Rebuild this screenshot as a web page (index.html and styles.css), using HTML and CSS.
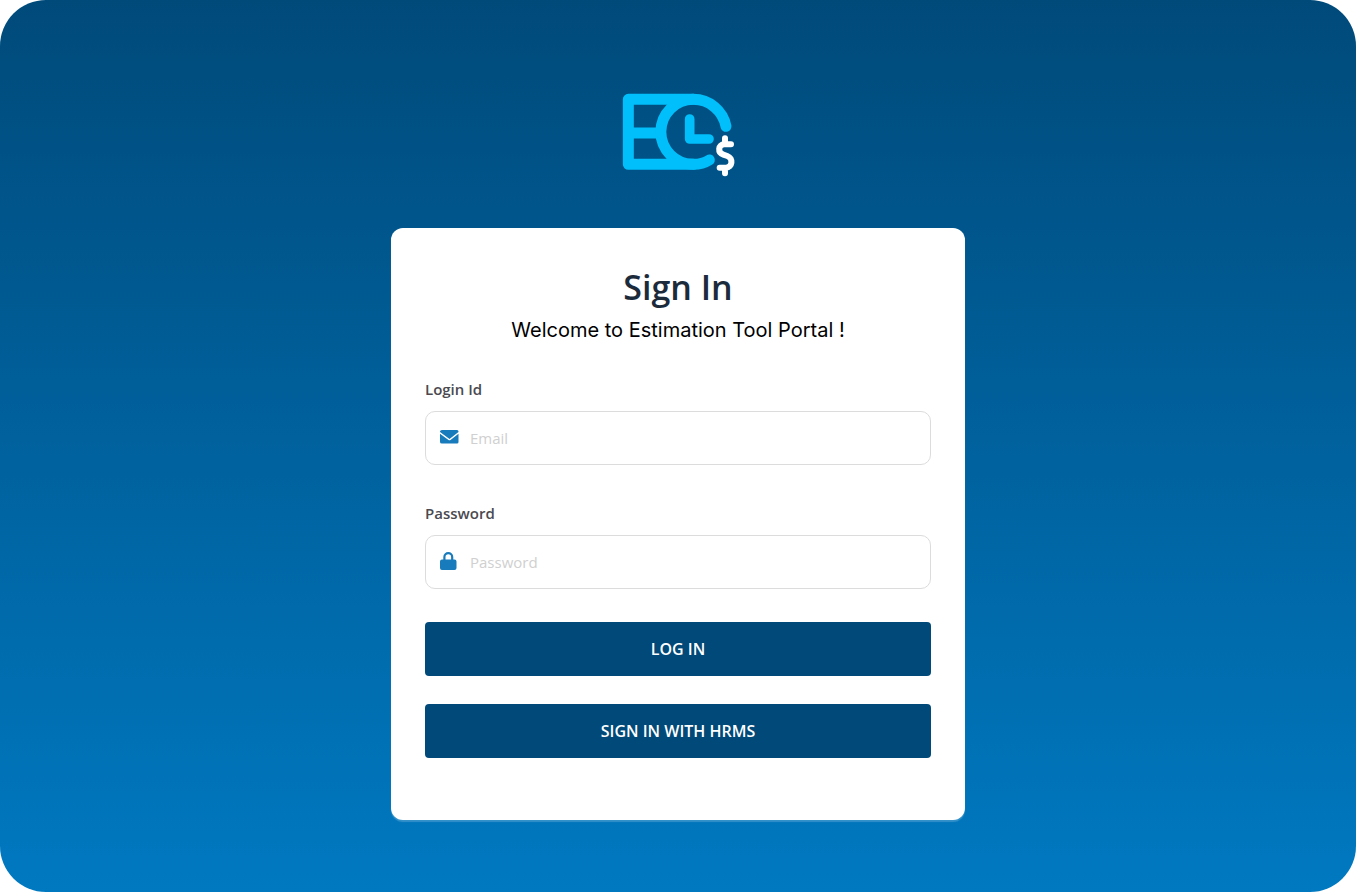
FILE: index.html
```html
<!DOCTYPE html>
<html lang="en">
<head>
    <meta charset="UTF-8">
    <meta name="viewport" content="width=device-width, initial-scale=1.0">
    <title>Estimation Tool Portal - Sign In</title>
    <link rel="stylesheet" href="styles.css">
</head>
<body>
    <main class="login-page">
        <svg class="logo" viewBox="36 40 339 252" fill="none" stroke-linecap="round" stroke-linejoin="round" role="img" aria-label="Estimation Tool">
            <g stroke="#00bffa" stroke-width="33">
                <path d="M250 59H55V254H250M55 160H150" />
                <path d="M348 140A100 100 0 0 0 250 59A97.500 97.500 0 0 0 250 254Q278 254 298 241" />
                <path d="M239 118V178H297" stroke-width="29" />
            </g>
            <path d="M345 176V194M345 264V281M363 194H343C324 194 322 219 340 225L352 229C371 236 367 264 348 264H329" stroke="#fff" stroke-width="18" />
        </svg>

        <section class="card">
            <h1>Sign In</h1>
            <p class="subtitle">Welcome to Estimation Tool Portal !</p>

            <form>
                <div class="field">
                    <label for="email">Login Id</label>
                    <div class="input-box">
                        <svg class="icon" viewBox="0 0 20 20" aria-hidden="true">
                            <path d="M2 2H17Q18.500 2 18.500 3.500V4L9.500 11L0 4V3.500Q0 2 2 2ZM0 5.800L8.500 12Q9.500 12.700 10.500 12L18.500 5.800V14Q18.500 15.500 17 15.500H2Q0 15.500 0 14Z" />
                        </svg>
                        <input type="email" id="email" placeholder="Email">
                    </div>
                </div>

                <div class="field">
                    <label for="password">Password</label>
                    <div class="input-box">
                        <svg class="icon" viewBox="0 0 20 20" aria-hidden="true">
                            <path d="M3.300 7.500V5A5 5 0 0 1 13.300 5V7.500H14.500Q16.500 7.500 16.500 9.500V16Q16.500 18 14.500 18H2Q0 18 0 16V9.500Q0 7.500 2 7.500ZM5.500 7.500H11.100V5A2.800 2.800 0 0 0 5.500 5Z" />
                        </svg>
                        <input type="password" id="password" placeholder="Password">
                    </div>
                </div>

                <div class="actions">
                    <button type="submit">LOG IN</button>
                    <button type="button">SIGN IN WITH HRMS</button>
                </div>
            </form>
        </section>
    </main>
</body>
</html>
```
FILE: styles.css
```css
* {
    box-sizing: border-box;
}
body {
    margin: 0;
    background-color: #fff;
    font-family: "Segoe UI", "Open Sans", sans-serif;
}
.login-page {
    display: flex;
    flex-direction: column;
    align-items: center;
    min-height: 100vh;
    padding: 93px 20px 72px;
    border-radius: 46px;
    background: linear-gradient(#004a7a, #0079c1);
}
.logo {
    width: 113px;
    height: 84px;
    margin-bottom: 51px;
}
.card {
    width: 100%;
    max-width: 574px;
    padding: 35px 34px 62px;
    border-radius: 12px;
    background-color: #fff;
    box-shadow: 0 2px 1px rgba(255, 255, 255, 0.2);
}
h1 {
    margin: 0;
    color: #1c2b3c;
    font-size: 34px;
    font-weight: 600;
    line-height: 48px;
    text-align: center;
}
.subtitle {
    margin: 5px 0 35px;
    color: #000;
    font-family: Inter, sans-serif;
    font-size: 20px;
    line-height: 28px;
    text-align: center;
}
.field + .field {
    margin-top: 38px;
}
label {
    display: block;
    margin-bottom: 12px;
    color: #4a4a50;
    font-size: 15px;
    font-weight: 600;
    line-height: 20px;
}
.input-box {
    display: flex;
    align-items: center;
    gap: 10px;
    height: 54px;
    padding: 0 14px;
    border: 1px solid #dcdcdc;
    border-radius: 10px;
}
.icon {
    flex: none;
    width: 20px;
    height: 20px;
    fill: #187bbb;
}
input {
    flex: 1;
    min-width: 0;
    padding: 0;
    border: none;
    outline: none;
    background: none;
    color: #333;
    font-family: inherit;
    font-size: 15px;
    line-height: 24px;
}
input::placeholder {
    color: #d0d0d0;
}
.actions {
    display: grid;
    gap: 28px;
    margin-top: 33px;
}
button {
    height: 54px;
    border: none;
    border-radius: 4px;
    background-color: #004979;
    color: #fff;
    font-family: inherit;
    font-size: 16px;
    font-weight: 600;
    cursor: pointer;
}
```
